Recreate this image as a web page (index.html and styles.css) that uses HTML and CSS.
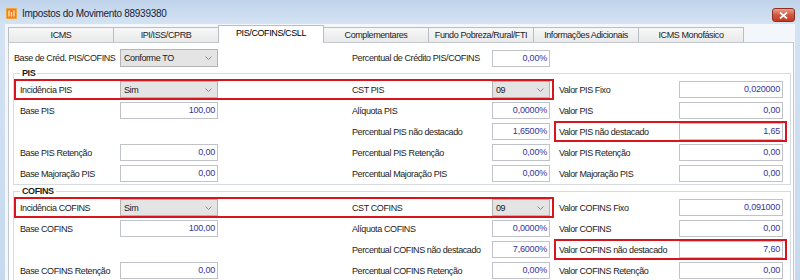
FILE: index.html
```html
<!DOCTYPE html>
<html lang="pt-BR">
<head>
    <meta charset="UTF-8">
    <title>Impostos do Movimento 88939380</title>
    <link rel="stylesheet" href="styles.css">
</head>
<body>
    <div class="window">
        <div class="titlebar">
            <svg class="app-icon" viewBox="0 0 11 11">
                <rect width="11" height="11" rx="1" fill="#f2a33a"/>
                <rect x="1" y="1" width="9" height="9" fill="#ee7f22"/>
                <path d="M3 2.5v6M5.5 4v4.5M8 2.5v6" stroke="#fff2c8" stroke-width="1.2"/>
            </svg>
            <span class="title">Impostos do Movimento 88939380</span>
            <div class="close-button">
                <svg viewBox="0 0 9 7" width="9" height="7">
                    <path d="M1 0.5l7 6M8 0.5l-7 6" stroke="#fff" stroke-width="1.8"/>
                </svg>
            </div>
        </div>

        <div class="client">
            <!-- Tabs -->
            <div class="tabs">
                <div class="tab">ICMS</div>
                <div class="tab">IPI/ISS/CPRB</div>
                <div class="tab active">PIS/COFINS/CSLL</div>
                <div class="tab">Complementares</div>
                <div class="tab">Fundo Pobreza/Rural/FTI</div>
                <div class="tab">Informações Adicionais</div>
                <div class="tab">ICMS Monofásico</div>
            </div>

            <div class="page">
                <div class="row-top">
                    <label>Base de Créd. PIS/COFINS</label>
                    <div class="combo combo-tall">Conforme TO <svg class="chevron" viewBox="0 0 7 4"><polyline points="0.5,0.5 3.5,3.5 6.5,0.5"/></svg></div>
                    <span></span>
                    <label>Percentual de Crédito PIS/COFINS</label>
                    <div class="field">0,00%</div>
                </div>

                <!-- PIS -->
                <fieldset class="group">
                    <legend class="group-title">PIS</legend>

                    <div class="row">
                        <div class="row-main marked">
                            <label>Incidência PIS</label>
                            <div class="combo">Sim <svg class="chevron" viewBox="0 0 7 4"><polyline points="0.5,0.5 3.5,3.5 6.5,0.5"/></svg></div>
                            <span></span>
                            <label>CST PIS</label>
                            <div class="combo">09 <svg class="chevron" viewBox="0 0 7 4"><polyline points="0.5,0.5 3.5,3.5 6.5,0.5"/></svg></div>
                        </div>
                        <div class="row-side">
                            <label>Valor PIS Fixo</label>
                            <div class="field">0,020000</div>
                        </div>
                    </div>

                    <div class="row">
                        <div class="row-main">
                            <label>Base PIS</label>
                            <div class="field">100,00</div>
                            <span></span>
                            <label>Alíquota PIS</label>
                            <div class="field">0,0000%</div>
                        </div>
                        <div class="row-side">
                            <label>Valor PIS</label>
                            <div class="field">0,00</div>
                        </div>
                    </div>

                    <div class="row">
                        <div class="row-main">
                            <span></span>
                            <span></span>
                            <span></span>
                            <label>Percentual PIS não destacado</label>
                            <div class="field">1,6500%</div>
                        </div>
                        <div class="row-side marked">
                            <label>Valor PIS não destacado</label>
                            <div class="field">1,65</div>
                        </div>
                    </div>

                    <div class="row">
                        <div class="row-main">
                            <label>Base PIS Retenção</label>
                            <div class="field">0,00</div>
                            <span></span>
                            <label>Percentual PIS Retenção</label>
                            <div class="field">0,00%</div>
                        </div>
                        <div class="row-side">
                            <label>Valor PIS Retenção</label>
                            <div class="field">0,00</div>
                        </div>
                    </div>

                    <div class="row">
                        <div class="row-main">
                            <label>Base Majoração PIS</label>
                            <div class="field">0,00</div>
                            <span></span>
                            <label>Percentual Majoração PIS</label>
                            <div class="field">0,00%</div>
                        </div>
                        <div class="row-side">
                            <label>Valor Majoração PIS</label>
                            <div class="field">0,00</div>
                        </div>
                    </div>
                </fieldset>

                <!-- COFINS -->
                <fieldset class="group">
                    <legend class="group-title">COFINS</legend>

                    <div class="row">
                        <div class="row-main marked">
                            <label>Incidência COFINS</label>
                            <div class="combo">Sim <svg class="chevron" viewBox="0 0 7 4"><polyline points="0.5,0.5 3.5,3.5 6.5,0.5"/></svg></div>
                            <span></span>
                            <label>CST COFINS</label>
                            <div class="combo">09 <svg class="chevron" viewBox="0 0 7 4"><polyline points="0.5,0.5 3.5,3.5 6.5,0.5"/></svg></div>
                        </div>
                        <div class="row-side">
                            <label>Valor COFINS Fixo</label>
                            <div class="field">0,091000</div>
                        </div>
                    </div>

                    <div class="row">
                        <div class="row-main">
                            <label>Base COFINS</label>
                            <div class="field">100,00</div>
                            <span></span>
                            <label>Alíquota COFINS</label>
                            <div class="field">0,0000%</div>
                        </div>
                        <div class="row-side">
                            <label>Valor COFINS</label>
                            <div class="field">0,00</div>
                        </div>
                    </div>

                    <div class="row">
                        <div class="row-main">
                            <span></span>
                            <span></span>
                            <span></span>
                            <label>Percentual COFINS não destacado</label>
                            <div class="field">7,6000%</div>
                        </div>
                        <div class="row-side marked">
                            <label>Valor COFINS não destacado</label>
                            <div class="field">7,60</div>
                        </div>
                    </div>

                    <div class="row">
                        <div class="row-main">
                            <label>Base COFINS Retenção</label>
                            <div class="field">0,00</div>
                            <span></span>
                            <label>Percentual COFINS Retenção</label>
                            <div class="field">0,00%</div>
                        </div>
                        <div class="row-side">
                            <label>Valor COFINS Retenção</label>
                            <div class="field">0,00</div>
                        </div>
                    </div>
                </fieldset>
            </div>
        </div>
    </div>
</body>
</html>
```

FILE: styles.css
```css
* {
    margin: 0;
    padding: 0;
    box-sizing: border-box;
}

body {
    width: 800px;
    height: 280px;
    overflow: hidden;
    font-family: "Liberation Sans", Arial, sans-serif;
    font-size: 9px;
    letter-spacing: -0.4px;
    color: #1b1b1b;
    background-color: #c8daee;
}

.window {
    height: 280px;
    display: flex;
    flex-direction: column;
    background: linear-gradient(to bottom, #bfd3ea, #d4e3f3 24px, #c6d9ee);
}

/* Title bar */
.titlebar {
    height: 24px;
    display: flex;
    align-items: center;
    padding: 3px 5px 0 6px;
}

.app-icon {
    width: 11px;
    height: 11px;
    margin-right: 5px;
}

.title {
    flex: 1;
    font-size: 10px;
    letter-spacing: -0.3px;
    color: #14233a;
}

.close-button {
    width: 23px;
    height: 14px;
    align-self: flex-start;
    margin-top: 5px;
    border: 1px solid #8e2f22;
    border-radius: 3px;
    background: linear-gradient(to bottom, #e9a18f, #d1573f 50%, #c23a22);
    display: flex;
    justify-content: center;
    align-items: center;
}

/* Client area */
.client {
    flex: 1;
    margin: 0 5px;
    padding: 1px 0 0 3px;
    background-color: #f3f6fa;
    overflow: hidden;
}

.tabs {
    height: 17px;
    display: flex;
    align-items: flex-end;
}

.tab {
    width: 106px;
    height: 15px;
    margin-right: -1px;
    border: 1px solid #b9bec6;
    border-bottom: none;
    background: linear-gradient(to bottom, #f7f7f7, #e9e9e9);
    text-align: center;
    line-height: 14px;
    white-space: nowrap;
    color: #222;
}

.tab.active {
    height: 18px;
    margin-bottom: -1px;
    position: relative;
    z-index: 1;
    background: #ffffff;
    line-height: 15px;
    color: #000;
}

.page {
    width: 786px;
    height: 260px;
    background-color: #ffffff;
    border: 1px solid #c3c8cf;
    padding-top: 6px;
}

label {
    white-space: nowrap;
}

.row-top {
    display: grid;
    grid-template-columns: 106px 98px 134px 140px 58px;
    align-items: center;
    height: 18px;
    padding-left: 5px;
}

/* Group boxes */
.group {
    margin: 0 2px 0 4px;
    padding: 0 2px 0 0;
    border: 1px solid #d6dbe1;
    min-inline-size: 0;
}

.group-title {
    margin-left: 6px;
    padding: 0 2px;
    font-weight: bold;
    line-height: 12px;
    color: #1b1b1b;
}

.row {
    display: flex;
    height: 21px;
}

.row-main {
    width: 540px;
    display: grid;
    grid-template-columns: 100px 98px 134px 140px 58px;
    align-items: center;
    padding: 0 2px 0 4px;
    border: 2px solid transparent;
}

.row-side {
    width: 233px;
    display: grid;
    grid-template-columns: 120px 104px;
    align-items: center;
    padding: 0 2px 0 3px;
    border: 2px solid transparent;
}

.marked {
    border-color: #d8141c;
}

/* Inputs */
.field {
    height: 17px;
    border: 1px solid #c0c4ca;
    background-color: #ffffff;
    color: #34349b;
    text-align: right;
    padding-right: 2px;
    line-height: 15px;
    letter-spacing: -0.2px;
}

.combo {
    height: 17px;
    border: 1px solid #b4b4b4;
    background-color: #e4e4e4;
    display: flex;
    align-items: center;
    justify-content: space-between;
    padding: 0 5px 0 3px;
}

.combo-tall {
    height: 18px;
}

.chevron {
    width: 7px;
    height: 4px;
    fill: none;
    stroke: #8a8a8a;
    stroke-width: 1;
}
```
